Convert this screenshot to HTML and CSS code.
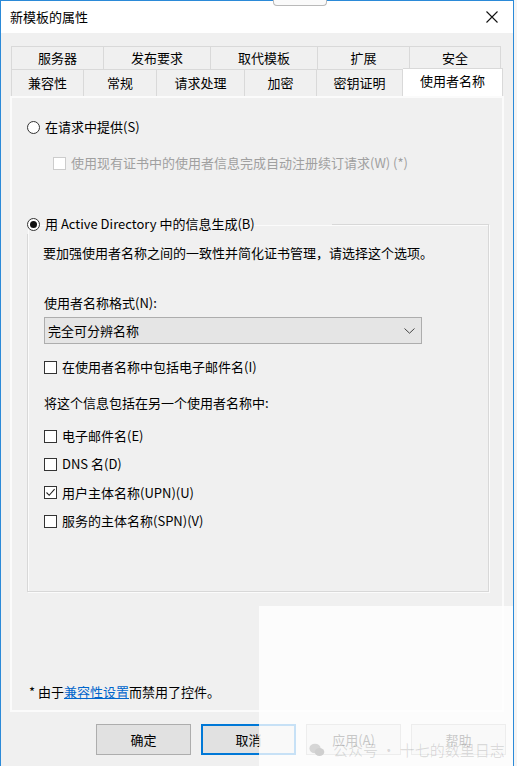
FILE: index.html
```html
<!DOCTYPE html>
<html lang="zh-CN">
<head>
<meta charset="utf-8">
<title>新模板的属性</title>
<link rel="stylesheet" href="styles.css">
</head>
<body>
<div class="screen">
  <div class="window">
    <div class="tip"></div>
    <div class="titlebar">
      <span class="title">新模板的属性</span>
      <svg class="close" width="12" height="12" viewBox="0 0 12 12"><path d="M0.5 0.5L11.5 11.5M11.5 0.5L0.5 11.5" stroke="#111" stroke-width="1.1" fill="none"/></svg>
    </div>
    <div class="client">
      <div class="tabs">
        <div class="tabrow back">
          <div class="tab w93">服务器</div>
          <div class="tab w107">发布要求</div>
          <div class="tab w107">取代模板</div>
          <div class="tab w92">扩展</div>
          <div class="tab w91">安全</div>
        </div>
        <div class="tabrow front">
          <div class="tab w73">兼容性</div>
          <div class="tab w73">常规</div>
          <div class="tab w88">请求处理</div>
          <div class="tab w72">加密</div>
          <div class="tab w86">密钥证明</div>
          <div class="tab w100 active">使用者名称</div>
        </div>
      </div>
      <div class="panel">
        <div class="row opt-first"><span class="radio"></span><span>在请求中提供(S)</span></div>
        <div class="row disabled sub"><span class="box"></span><span>使用现有证书中的使用者信息完成自动注册续订请求(W) (*)</span></div>
        <fieldset class="group">
          <legend class="legend"><span class="radio on"></span><span>用 Active Directory 中的信息生成(B)</span></legend>
          <div class="group-body">
            <div class="row desc">要加强使用者名称之间的一致性并简化证书管理，请选择这个选项。</div>
            <div class="row lbl">使用者名称格式(N):</div>
            <div class="select">
              <span>完全可分辨名称</span>
              <svg class="chev" width="11" height="6" viewBox="0 0 11 6"><path d="M0.5 0.5L5.5 5.2L10.5 0.5" stroke="#444" stroke-width="1" fill="none"/></svg>
            </div>
            <div class="row chk1"><span class="box"></span><span>在使用者名称中包括电子邮件名(I)</span></div>
            <div class="row lbl2">将这个信息包括在另一个使用者名称中:</div>
            <div class="checks">
              <div class="row"><span class="box"></span><span>电子邮件名(E)</span></div>
              <div class="row"><span class="box"></span><span>DNS 名(D)</span></div>
              <div class="row"><span class="box checked"><svg width="11" height="11" viewBox="0 0 11 11"><path d="M1.5 5.5L4.2 8.3L9.6 2.2" stroke="#222" stroke-width="1.1" fill="none"/></svg></span><span>用户主体名称(UPN)(U)</span></div>
              <div class="row"><span class="box"></span><span>服务的主体名称(SPN)(V)</span></div>
            </div>
          </div>
        </fieldset>
        <p class="note">* 由于<a class="link" href="#">兼容性设置</a>而禁用了控件。</p>
      </div>
      <div class="buttons">
        <div class="btn">确定</div>
        <div class="btn focus">取消</div>
        <div class="btn">应用(A)</div>
        <div class="btn">帮助</div>
      </div>
    </div>
    <div class="overlay">
      <div class="watermark">
        <svg class="wx" width="16" height="14" viewBox="0 0 16 14"><ellipse cx="6" cy="5.5" rx="5.6" ry="4.8" fill="#d6d6d6"/><ellipse cx="10.5" cy="9" rx="4.8" ry="4" fill="#cfcfcf"/></svg>
        <span>公众号 · 十七的数里日志</span>
      </div>
    </div>
  </div>
  <div class="behind"></div>
</div>
</body>
</html>
```
FILE: styles.css
```css
html, body {
  margin: 0;
  padding: 0;
}
body {
  width: 517px;
  height: 766px;
  overflow: hidden;
  background: #f3f3f3;
  font-family: "Noto Sans CJK SC", "Microsoft YaHei", sans-serif;
  font-size: 13px;
  color: #000;
}
.screen {
  display: flex;
  width: 517px;
  height: 766px;
}
.window {
  position: relative;
  box-sizing: border-box;
  width: 514px;
  height: 766px;
  border-left: 1px solid #2b8ad8;
  border-right: 1px solid #2b8ad8;
  border-top: 1px solid #2b8ad8;
  background: #f0f0f0;
  display: flex;
  flex-direction: column;
}
.behind {
  flex: 1;
  background: #f4f4f4;
}
.tip {
  position: absolute;
  left: 272px;
  top: -1px;
  width: 52px;
  height: 5px;
  border: 1px solid #b9b9b9;
  border-top: none;
  border-radius: 0 0 4px 4px;
  background: #fafafa;
}
.titlebar {
  height: 32px;
  background: #fff;
  display: flex;
  align-items: center;
  justify-content: space-between;
  padding: 0 15px 0 9px;
}
.title {
  font-size: 13px;
  line-height: 20px;
}
.close {
  display: block;
}
.client {
  flex: 1;
  padding: 13px 0 0 9px;
  display: flex;
  flex-direction: column;
}
.tabs {
  margin-left: 1px;
}
.tabrow {
  display: flex;
}
.tab {
  box-sizing: border-box;
  border: 1px solid #d9d9d9;
  border-left: none;
  background: #f0f0f0;
  text-align: center;
  white-space: nowrap;
}
.tab:first-child {
  border-left: 1px solid #d9d9d9;
}
.back .tab {
  height: 24px;
  line-height: 22px;
}
.front .tab {
  height: 26px;
  line-height: 25px;
  border-top: none;
  border-bottom: none;
}
.front .tab.active {
  position: relative;
  z-index: 1;
  height: 28px;
  margin-top: -2px;
  line-height: 24px;
  border-top: 1px solid #d9d9d9;
  background: #fff;
}
.w93 { width: 93px; }
.w107 { width: 107px; }
.w92 { width: 92px; }
.w91 { width: 91px; }
.w73 { width: 73px; }
.w88 { width: 88px; }
.w72 { width: 72px; }
.w86 { width: 86px; }
.w100 { width: 100px; }

.panel {
  box-sizing: border-box;
  width: 494px;
  height: 616px;
  border: 2px solid #fbfbfb;
  background: #f0f0f0;
  padding: 19px 0 8px 15px;
  display: flex;
  flex-direction: column;
  align-items: flex-start;
}
.row {
  display: flex;
  align-items: center;
  height: 20px;
  line-height: 20px;
  white-space: nowrap;
}
.radio {
  box-sizing: border-box;
  width: 13px;
  height: 13px;
  border: 1px solid #333;
  border-radius: 50%;
  background: #fff;
  margin-right: 5px;
  display: flex;
  align-items: center;
  justify-content: center;
  flex: none;
}
.radio.on::after {
  content: "";
  width: 7px;
  height: 7px;
  border-radius: 50%;
  background: #111;
}
.box {
  box-sizing: border-box;
  width: 13px;
  height: 13px;
  border: 1px solid #333;
  background: #fff;
  margin-right: 5px;
  flex: none;
  display: flex;
  align-items: center;
  justify-content: center;
}
.box svg {
  display: block;
}
.sub {
  margin-top: 16px;
  margin-left: 26px;
}
.disabled {
  color: #a0a0a0;
}
.disabled .box {
  border-color: #cccccc;
}
.group {
  box-sizing: border-box;
  width: 462px;
  margin: 41px 0 0 0;
  padding: 0;
  border: 1px solid #d8d8d8;
  box-shadow: inset 1px 1px 0 #fbfbfb, 1px 1px 0 #fbfbfb;
  min-inline-size: 0;
}
.legend {
  display: flex;
  align-items: center;
  box-sizing: border-box;
  width: 305px;
  height: 20px;
  line-height: 20px;
  padding: 0;
  margin-left: -1px;
  white-space: nowrap;
}
.group-body {
  padding: 9px 0 60px 15px;
}
.lbl {
  margin-top: 30px;
  margin-left: 1px;
}
.select {
  box-sizing: border-box;
  width: 378px;
  height: 27px;
  margin-top: 4px;
  margin-left: 1px;
  border: 1px solid #adadad;
  background: #e5e5e5;
  display: flex;
  align-items: center;
  justify-content: space-between;
  padding: 0 6px 0 3px;
}
.chev {
  display: block;
}
.chk1 {
  margin-top: 13px;
  margin-left: 1px;
}
.lbl2 {
  margin-top: 16px;
  margin-left: 1px;
}
.checks {
  margin-top: 13px;
  margin-left: 1px;
  display: flex;
  flex-direction: column;
  gap: 8.4px;
}
.note {
  margin: auto 0 0 2px;
  height: 20px;
  line-height: 20px;
}
.link {
  color: #0066cc;
  text-decoration: underline;
}
.buttons {
  display: flex;
  justify-content: flex-end;
  gap: 10px;
  margin-top: 12px;
  padding-right: 7px;
}
.btn {
  box-sizing: border-box;
  width: 95px;
  height: 31px;
  border: 1px solid #adadad;
  background: #e1e1e1;
  display: flex;
  align-items: center;
  justify-content: center;
}
.btn.focus {
  border: 2px solid #0078d7;
}
.overlay {
  position: absolute;
  left: 258px;
  top: 605px;
  width: 254px;
  height: 161px;
  background: rgba(255, 255, 255, 0.78);
  z-index: 5;
}
.watermark {
  position: absolute;
  left: 50px;
  top: 133px;
  display: flex;
  align-items: center;
  gap: 8px;
  font-size: 15px;
  color: rgba(0, 0, 0, 0.12);
  white-space: nowrap;
}
.wx {
  display: block;
}
```
